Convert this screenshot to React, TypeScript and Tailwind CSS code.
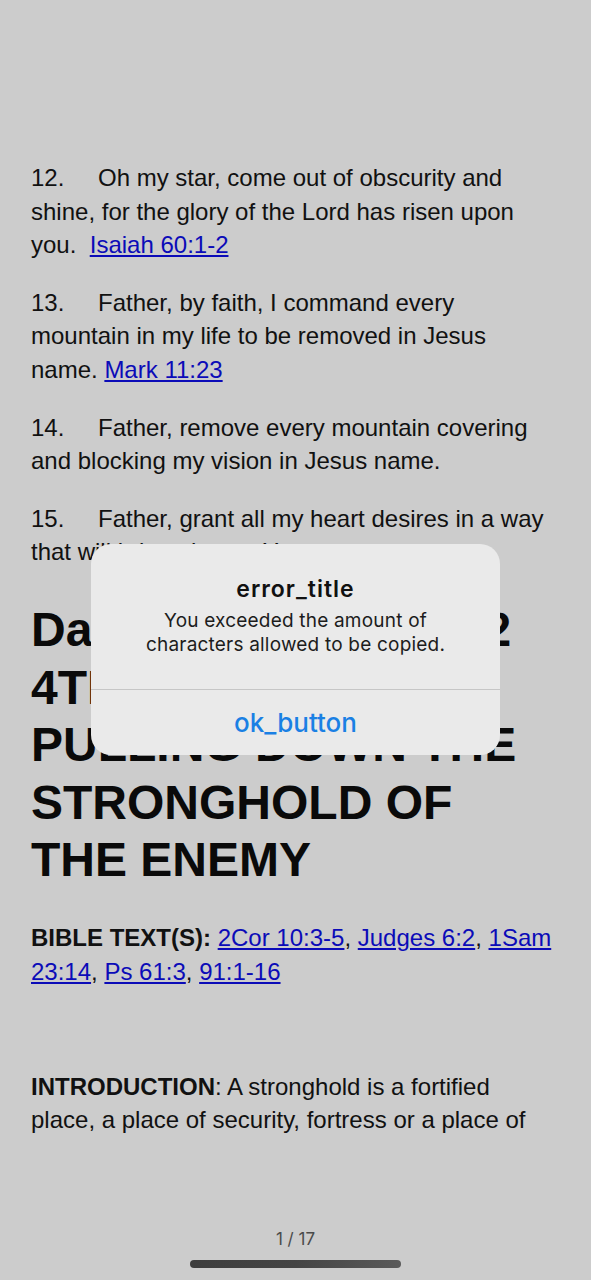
import type { ReactNode } from "react";

function Prayer({ n, children }: { n: number; children: ReactNode }) {
  return (
    <p className="my-6 first:mt-0">
      <span className="inline-block w-[67px]">{n}.</span>
      {children}
    </p>
  );
}

function Ref({ children }: { children: ReactNode }) {
  return <a className="text-[#0b0bb8] underline">{children}</a>;
}

export default function App() {
  return (
    <div className="relative h-[1280px] w-full overflow-hidden bg-[#cccccc] font-['Liberation_Sans',Arial,sans-serif] text-[#111]">
      <article className="pl-[31px] pr-[36px] pt-[161px] text-[24px] leading-[1.4]">
        <Prayer n={12}>
          Oh my star, come out of obscurity and shine, for the glory of the Lord has risen upon
          you.{"\u00a0\u00a0"}
          <Ref>Isaiah 60:1-2</Ref>
        </Prayer>
        <Prayer n={13}>
          Father, by faith, I command every mountain in my life to be removed in Jesus name.{" "}
          <Ref>Mark 11:23</Ref>
        </Prayer>
        <Prayer n={14}>
          Father, remove every mountain covering and blocking my vision in Jesus name.
        </Prayer>
        <Prayer n={15}>
          Father, grant all my heart desires in a way that will bring glory to Your name.
        </Prayer>

        <h1 className="my-8 text-[48px] font-bold leading-[1.2] text-[#0a0a0a]">
          Day 24 — Session 12 4TH PRAYER: PULLING DOWN THE STRONGHOLD OF THE ENEMY
        </h1>

        <p className="my-6">
          <b>BIBLE TEXT(S):</b> <Ref>2Cor 10:3-5</Ref>, <Ref>Judges 6:2</Ref>, <Ref>1Sam 23:14</Ref>,{" "}
          <Ref>Ps 61:3</Ref>, <Ref>91:1-16</Ref>
        </p>
        <p className="my-6">{"\u00a0"}</p>
        <p className="my-6">
          <b>INTRODUCTION</b>: A stronghold is a fortified place, a place of security, fortress or a
          place of
        </p>
      </article>

      {/* alert */}
      <div className="absolute left-[91px] top-[544px] flex w-[409px] flex-col overflow-hidden rounded-[20px] bg-[#eaeaea] text-center font-['Inter',sans-serif]">
        <div className="px-4 pb-[32px] pt-[31px]">
          <h2 className="text-[23px] font-semibold leading-[28px] tracking-[1px] text-[#111]">
            error_title
          </h2>
          <p className="mt-[6px] text-[19px] leading-[24px] tracking-[0.2px] text-[#1c1c1c]">
            You exceeded the amount of
            <br />
            characters allowed to be copied.
          </p>
        </div>
        <div className="h-px bg-[#c6c6c6]" />
        <button className="h-[65px] text-[26px] font-medium text-[#1a80e4]">ok_button</button>
      </div>

      {/* page indicator */}
      <div className="absolute inset-x-0 top-[1228px] text-center font-['Inter',sans-serif] text-[17px] leading-[22px] text-[#4a4a4a]">
        1 / 17
      </div>
      <div className="absolute left-[190px] top-[1260px] h-2 w-[211px] rounded-full bg-gradient-to-r from-[#3d3d3d] via-[#444] to-[#5a5a5a]" />
    </div>
  );
}
